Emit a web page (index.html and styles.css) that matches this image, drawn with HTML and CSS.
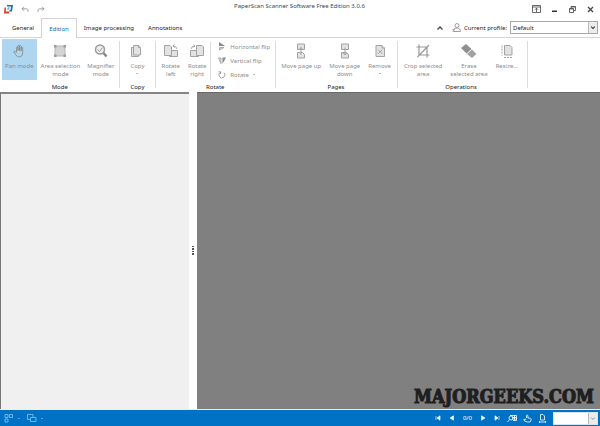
FILE: index.html
```html
<!DOCTYPE html>
<html lang="en">
<head>
<meta charset="utf-8">
<title>PaperScan Scanner Software Free Edition 3.0.6</title>
<link rel="stylesheet" href="styles.css">
</head>
<body>
<header class="titlebar">
  <div class="quick">
    <svg class="logo" width="10" height="10" viewBox="0 0 10 10"><path d="M3 1h6l-1 6.500H5.500L5.300 6h1.200l.5-3.500H3z" fill="#1f6f9f"/><path d="M.5 3.500H2L1.800 7.500h3.400L5 9.500H0z" fill="#d8432e"/><path d="M3.600 3.600L5.600 3 5 5.800 3.300 6z" fill="#6bb5d8"/></svg>
    <button class="bare" aria-label="Undo"><svg width="8" height="7" viewBox="0 0 8 7" class="line"><path d="M3 .800L1 2.800l2 2M1 2.800h4.500q1.500 0 1.500 2v1"/></svg></button>
    <button class="bare" aria-label="Redo"><svg width="8" height="7" viewBox="0 0 8 7" class="line"><path d="M5 .800l2 2-2 2M7 2.800H2.500Q1 2.800 1 4.800v1"/></svg></button>
  </div>
  <h1 class="title">PaperScan Scanner Software Free Edition 3.0.6</h1>
  <div class="window">
    <button class="bare" aria-label="Ribbon options"><svg width="9" height="9" viewBox="0 0 9 9" class="line dark"><path d="M.5.500h8v7h-8zM.5 2h8M4.500 7V3.200M3 4.700l1.500-1.500L6 4.700"/></svg></button>
    <button class="bare" aria-label="Minimize"><svg width="9" height="9" viewBox="0 0 9 9"><path d="M2 5.500h5v1.500H2z" fill="#333"/></svg></button>
    <button class="bare" aria-label="Restore"><svg width="9" height="9" viewBox="0 0 9 9" class="line dark"><path d="M1.500 3.500h4v4h-4zM3 3.500v-2h4.500v4h-2M3 2h4.500M1.500 4h4"/></svg></button>
    <button class="bare" aria-label="Close"><svg width="9" height="9" viewBox="0 0 9 9" class="line dark bold"><path d="M2 2l5 5M7 2L2 7"/></svg></button>
  </div>
</header>

<nav class="tabs">
  <button class="tab">General</button>
  <button class="tab active">Edition</button>
  <button class="tab">Image processing</button>
  <button class="tab">Annotations</button>
  <div class="profile">
    <button class="bare" aria-label="Collapse ribbon"><svg width="8" height="6" viewBox="0 0 8 6" class="line dark bold"><path d="M1.500 4.500L4 2l2.500 2.500"/></svg></button>
    <svg width="9" height="9" viewBox="0 0 9 9" class="line"><circle cx="5" cy="2.500" r="2"/><path d="M1.500 8.500V7Q2 5.200 4 5h2q2.200.3 2.500 3.500z"/><path d="M.5 6l2.500 2.500M3 6L.5 8.500" stroke="#e98a80"/></svg>
    <label for="profile">Current profile:</label>
    <span class="select wide"><select id="profile"><option>Default</option></select><svg class="arrow" width="9" height="10" viewBox="0 0 9 10"><path d="M2.500 4l2 2.200 2-2.200" fill="none" stroke="#333" stroke-width="1.200"/></svg></span>
  </div>
</nav>

<section class="ribbon">
  <div class="group mode">
    <div class="tools">
      <button class="tool selected"><svg width="16" height="16" viewBox="0 0 16 16" class="line"><path d="M5.500 9V4.200q.8-1 1.500 0V8M7 7V2.700q.8-1 1.600 0V8M8.600 7V3q.8-1 1.600 0V8M10.200 8V4.500q.9-.8 1.500.2V10q0 4-3.700 4Q6 14 5 12L2.800 9.200q0-1.400 1.200-1L5.500 10"/></svg><span>Pan mode</span></button>
      <button class="tool"><svg width="16" height="16" viewBox="0 0 16 16"><path d="M3 3h10v10H3z" fill="#d4d4d4" stroke="#b4b4b4"/><path d="M2 2h2.500v2.500H2zM11.500 2H14v2.500h-2.500zM2 11.500h2.500V14H2zM11.500 11.500H14V14h-2.500z" fill="#9c9c9c"/></svg><span>Area selection<br>mode</span></button>
      <button class="tool"><svg width="16" height="16" viewBox="0 0 16 16"><circle cx="7" cy="6.500" r="4.500" fill="#eee" stroke="#999" stroke-width="1.500"/><path d="M10.500 10l3 3.500" stroke="#888" stroke-width="2.500"/><path d="M4.500 6.500l2 2 3-4" fill="none" stroke="#999"/></svg><span>Magnifier<br>mode</span></button>
    </div>
    <h2>Mode</h2>
  </div>
  <div class="group copy">
    <div class="tools">
      <button class="tool"><svg width="16" height="16" viewBox="0 0 16 16" class="shape"><path d="M2.500 4.500h7v9h-7z"/><path d="M4.500 2.500h5l2 2v7.500h-7z"/><path d="M9.500 2.500v2h2"/></svg><span>Copy</span><i class="drop"></i></button>
    </div>
    <h2>Copy</h2>
  </div>
  <div class="group">
    <div class="tools">
      <button class="tool"><svg width="16" height="16" viewBox="0 0 16 16" class="shape"><path d="M6.500 7.500h8v6h-8z"/><path d="M1.500 2.500H7L8.500 4v8.500h-7z"/><path d="M14 6Q13.500 3 10 3M11.500 1.500L10 3l1.500 1.500" fill="none"/></svg><span>Rotate<br>left</span></button>
      <button class="tool"><svg width="16" height="16" viewBox="0 0 16 16" class="shape"><path d="M1.500 7.500h8v6h-8z"/><path d="M7.500 2.500H13L14.500 4v8.500h-7z"/><path d="M2 6Q2.500 3 6 3M4.500 1.500L6 3 4.500 4.500" fill="none"/></svg><span>Rotate<br>right</span></button>
      <div class="list">
        <button><svg width="8" height="9" viewBox="0 0 8 9"><path d="M1 0l6 4H1z" fill="#888"/><path d="M1.500 8V5.500H6z" fill="#ddd" stroke="#aaa"/></svg>Horizontal flip</button>
        <button><svg width="8" height="9" viewBox="0 0 8 9"><path d="M.5 2h2.500v5.500z" fill="#ddd" stroke="#aaa"/><path d="M4.500 1.500H8L4.500 8z" fill="#888"/></svg>Vertical flip</button>
        <button><svg width="8" height="9" viewBox="0 0 8 9" class="line"><path d="M2.500 2.200a3 3 0 1 0 3.500.5M2.500 4V1.800H.5"/></svg>Rotate<i class="drop"></i></button>
      </div>
    </div>
    <h2>Rotate</h2>
  </div>
  <div class="group">
    <div class="tools">
      <button class="tool"><svg width="16" height="16" viewBox="0 0 16 16" class="shape"><path d="M4.500 1v5.500h7V1zM4.500 15V9.500h5l2 2V15z"/><path d="M8 12V4.500M6 6.500l2-2 2 2" fill="none"/></svg><span>Move page up</span></button>
      <button class="tool"><svg width="16" height="16" viewBox="0 0 16 16" class="shape"><path d="M4.500 1v5.500h7V1zM4.500 15V9.500h5l2 2V15z"/><path d="M8 4.500V12M6 10l2 2 2-2" fill="none"/></svg><span>Move page<br>down</span></button>
      <button class="tool"><svg width="16" height="16" viewBox="0 0 16 16" class="shape"><path d="M4 2.500h6l2.500 2.500v8.500H4z"/><path d="M10 2.500V5h2.500M6.200 6.700l4 4M10.200 6.700l-4 4"/></svg><span>Remove</span><i class="drop"></i></button>
    </div>
    <h2>Pages</h2>
  </div>
  <div class="group operations">
    <div class="tools">
      <button class="tool"><svg width="16" height="16" viewBox="0 0 16 16"><path d="M4 1.500V12h10.500M1.500 4H12v10.500M2.500 14L14 2" fill="none" stroke="#999" stroke-width="1.200"/></svg><span>Crop selected<br>area</span></button>
      <button class="tool"><svg width="16" height="16" viewBox="0 0 16 16"><path d="M0 5L5 1l5.500 5-5 4.500z" fill="#8f8f8f"/><path d="M6 11l5-4.500L15.500 11l-4.500 4z" fill="#a2a2a2"/></svg><span>Erase<br>selected area</span></button>
      <button class="tool"><svg width="16" height="16" viewBox="0 0 16 16" class="shape"><path d="M5.500 2.500h5.500l2 2V12H5.500z"/><path d="M3 2.500v10M5 14.500h8.500" stroke-dasharray="2 1"/></svg><span>Resize...</span></button>
    </div>
    <h2>Operations</h2>
  </div>
</section>

<main class="work">
  <aside class="thumbs"></aside>
  <div class="splitter"><svg width="2" height="9" viewBox="0 0 2 9" fill="#555"><path d="M0 0h2v1H0zM0 2h2v2H0zM0 5h2v1H0zM0 7h2v2H0z"/></svg></div>
  <div class="canvas"><p class="mark">MAJORGEEKS.COM</p></div>
</main>

<footer class="status">
  <button class="bare" aria-label="View"><svg width="10" height="10" viewBox="0 0 10 10" class="line pale"><path d="M1 1.500h3v3H1zM5.500 1.500h3v3h-3zM1 6h3v3H1z"/></svg><i class="drop"></i></button>
  <button class="bare" aria-label="Layout"><svg width="10" height="10" viewBox="0 0 10 10" class="line pale"><path d="M3.500 6.500h-3v-5h5.500v2.500M3.500 4.500H9v4H3.500z"/></svg><i class="drop"></i></button>
  <div class="pager">
    <button class="bare" aria-label="First page"><svg width="6" height="6" viewBox="0 0 6 6"><path d="M1 1v4M5 .800v4.400L2 3z"/></svg></button>
    <button class="bare" aria-label="Previous page"><svg width="6" height="6" viewBox="0 0 6 6"><path d="M4.500.800v4.400L1 3z"/></svg></button>
    <span class="count">0/0</span>
    <button class="bare" aria-label="Next page"><svg width="6" height="6" viewBox="0 0 6 6"><path d="M1.500.800v4.400L5 3z"/></svg></button>
    <button class="bare" aria-label="Last page"><svg width="6" height="6" viewBox="0 0 6 6"><path d="M5 1v4M1 .800v4.400L4 3z"/></svg></button>
  </div>
  <div class="view">
    <button class="bare" aria-label="Zoom area"><svg width="10" height="9" viewBox="0 0 10 9" class="line white"><circle cx="4" cy="4" r="2"/><path d="M2.500 5.500L.5 8M3 1.500h6.500v5H6M5 3.500h4.500M5 5h4.500M7.500 1.500v5"/></svg></button>
    <button class="bare" aria-label="Pan"><svg width="9" height="9" viewBox="0 0 9 9" class="line white"><path d="M3.500 4V1.500q.7-1 1.400 0V4l2.600.4q1 .3.700 1.200l-1 2.400H4.300L1.500 7 .8 5.500l2.500-.3"/></svg></button>
    <button class="bare" aria-label="Fit page"><svg width="9" height="9" viewBox="0 0 9 9" class="line white"><path d="M2.500.500H5L6.500 2v4h-4zM1 8h7M1.500 7v2M7.500 7v2"/></svg></button>
    <span class="select"><select aria-label="Zoom"><option></option></select><svg class="arrow" width="9" height="10" viewBox="0 0 9 10"><path d="M2.500 4l2 2.200 2-2.200" fill="none" stroke="#888"/></svg></span>
  </div>
</footer>
</body>
</html>
```

FILE: styles.css
```css
* { box-sizing: border-box; }

body {
  margin: 0;
  min-height: 100vh;
  display: flex;
  flex-direction: column;
  background: #fff;
  color: #222;
  font: 6px/8px "Noto Sans", "Open Sans", sans-serif;
}

button, select {
  margin: 0;
  padding: 0;
  border: 0;
  background: none;
  color: inherit;
  font: inherit;
}

svg { display: block; flex: none; }
h1, h2, p { margin: 0; font-size: 6px; font-weight: normal; }

.bare { display: flex; align-items: center; gap: 4px; }
.line { fill: none; stroke: #888; stroke-width: 0.800; }
.dark { stroke: #444; }
.bold { stroke-width: 1.300; }
.pale { stroke: #8cc4ee; }
.white { stroke: #fff; }
.shape { fill: #e2e2e2; stroke: #a3a3a3; }

.drop {
  width: 2px;
  height: 1px;
  background: currentColor;
  opacity: 0.6;
}

.titlebar {
  display: grid;
  grid-template-columns: 1fr auto 1fr;
  height: 18px;
  padding: 0 5px 0 4px;
}
.quick { display: flex; align-items: center; gap: 8px; }
.logo { margin-right: -1px; }
.title { color: #444; line-height: 13px; }
.window { display: flex; align-items: center; justify-content: flex-end; gap: 9px; }

.tabs {
  display: flex;
  height: 20px;
  padding: 0 2px 0 5px;
  border-bottom: 1px solid #d4d4d4;
}
.tab { padding: 0 7px; }
.active {
  height: 20px;
  border: 1px solid #d4d4d4;
  border-bottom: 0;
  background: #fff;
  color: #0072c6;
}
.profile {
  display: flex;
  align-items: center;
  gap: 3px;
  margin-left: auto;
}
.profile .bare { margin-right: 5px; }

.select {
  display: grid;
  width: 45px;
  height: 13px;
  border: 1px solid #a8a8a8;
  background: #fff;
}
.wide { width: 88px; }
.select > * { grid-area: 1 / 1; }
.select select { appearance: none; width: 100%; height: 11px; padding: 0 10px 0 2px; }
.arrow {
  justify-self: end;
  height: 11px;
  background: #ececec;
  border-left: 1px solid #b8b8b8;
  pointer-events: none;
}

.ribbon { display: flex; height: 54px; padding: 1px 0 0 1px; }
.group {
  display: flex;
  flex-direction: column;
  position: relative;
  padding: 0 3px 0 1px;
}
.group::after {
  content: "";
  position: absolute;
  top: 2px;
  bottom: 4px;
  right: 0;
  width: 1px;
  background: #dcdcdc;
}
.group h2 { margin-top: 3px; text-align: center; }
.tools { display: flex; height: 41px; }
.mode .tools { gap: 1px; }
.copy .tools { padding: 0 4px; }
.operations { padding: 0 6px 0 2px; }
.tool {
  display: flex;
  flex-direction: column;
  align-items: center;
  padding: 4px 4px 0;
  color: #8c8c8c;
}
.mode .tool { padding: 4px 3px 0; }
.tool span { margin-top: 3px; }
.tool .drop { margin-top: 3px; }
.selected { background: #aed6f1; }

.list {
  display: flex;
  flex-direction: column;
  gap: 5px;
  margin-top: 3px;
  padding: 0 3px 0 7px;
  border-left: 1px solid #dcdcdc;
  color: #8c8c8c;
}
.list button { display: flex; align-items: center; gap: 4px; }

.work { display: flex; flex: 1; }
.thumbs {
  flex: 0 0 31.5%;
  border-top: 2px solid #858585;
  border-left: 1px solid #777;
  background: #f0f0f0;
}
.splitter { flex: 0 0 8px; display: grid; place-items: center; }
.canvas {
  flex: 1;
  display: flex;
  align-items: flex-end;
  justify-content: flex-end;
  border-top: 1px solid #6a6a6a;
  background: #808080;
}
.mark {
  padding: 0 6px 1px 0;
  color: #1f1f1f;
  font: bold 18px/22px "DejaVu Serif Condensed", "DejaVu Serif", serif;
  -webkit-text-stroke: 1px #1f1f1f;
}

.status {
  display: flex;
  align-items: center;
  gap: 7px;
  height: 17px;
  padding: 0 2px 0 4px;
  border-top: 1px solid #e4f2fc;
  background: #0072c6;
  color: #fff;
}
.status .bare .drop { background: #8cc4ee; }
.pager { display: flex; align-items: center; gap: 8px; margin-left: auto; }
.pager path { fill: #fff; stroke: #fff; stroke-width: 0.600; }
.view { display: flex; align-items: center; gap: 6px; }
.view .select { border-color: #d4e4f0; color: #222; }
```
